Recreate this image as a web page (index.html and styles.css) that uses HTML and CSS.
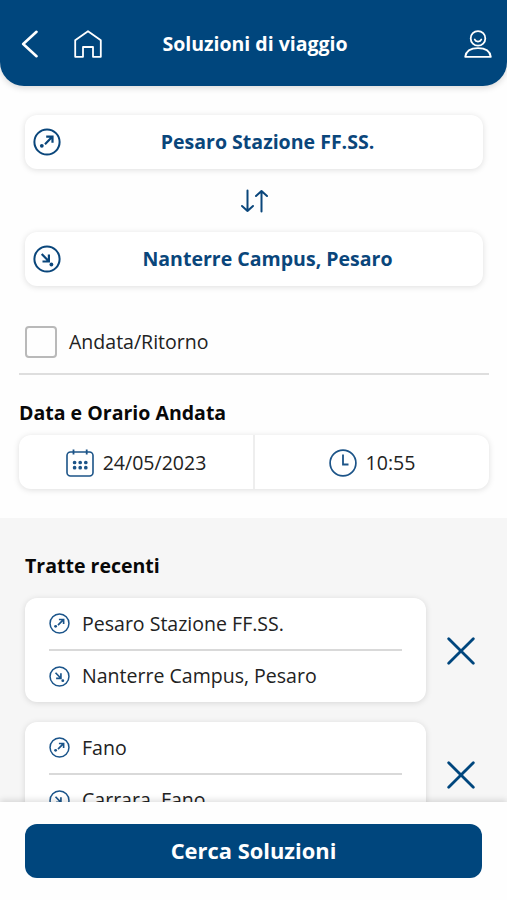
FILE: index.html
```html
<!DOCTYPE html>
<html lang="it">
<head>
<meta charset="utf-8">
<meta name="viewport" content="width=device-width, initial-scale=1">
<title>Soluzioni di viaggio</title>
<link rel="stylesheet" href="styles.css">
</head>
<body>
<svg class="defs" aria-hidden="true">
  <symbol id="depart" viewBox="0 0 28 28">
    <circle cx="14" cy="14" r="12.6" fill="none" stroke="currentColor" stroke-width="2"/>
    <path d="M12 16.2 19.2 8.8M13.2 8.6h6.3v6.2" fill="none" stroke="currentColor" stroke-width="2.2"/>
    <circle cx="8.8" cy="17.8" r="1.9" fill="currentColor"/>
  </symbol>
  <symbol id="arrive" viewBox="0 0 28 28">
    <circle cx="14" cy="14" r="12.6" fill="none" stroke="currentColor" stroke-width="2"/>
    <path d="M8.7 9 15.5 16M15.9 9.5v7H9.5" fill="none" stroke="currentColor" stroke-width="2.2"/>
    <circle cx="18.4" cy="19.5" r="1.9" fill="currentColor"/>
  </symbol>
  <symbol id="close" viewBox="0 0 28 28">
    <path d="M1.7 1.7 26.3 26.3M26.3 1.7 1.7 26.3" fill="none" stroke="currentColor" stroke-width="2.8" stroke-linecap="round"/>
  </symbol>
</svg>
<div class="app">
  <header class="topbar">
    <svg class="back" viewBox="0 0 18 28"><path d="M15.5 1.8 2.2 14 15.5 26.2" fill="none" stroke="currentColor" stroke-width="2.6" stroke-linecap="round" stroke-linejoin="round"/></svg>
    <svg class="home" viewBox="0 0 28 28"><path d="M1.2 10.2 14 1.2 26.8 10.2V26.8H19V17H9V26.8H1.2Z" fill="none" stroke="currentColor" stroke-width="1.8" stroke-linejoin="round"/></svg>
    <h1>Soluzioni di viaggio</h1>
    <svg class="user" viewBox="0 0 28 28"><g fill="none" stroke="currentColor" stroke-width="1.8" stroke-linejoin="round" stroke-linecap="round"><circle cx="14" cy="8.4" r="7.3"/><path d="M10.7 9.5c1 2.7 5.6 2.7 6.6 0M1.2 26.8c.8-5.5 5.5-8.6 12.8-8.6s12 3.1 12.8 8.6Z"/></g></svg>
  </header>
  <main class="search">
    <div class="stop"><svg><use href="#depart"/></svg><span>Pesaro Stazione FF.SS.</span></div>
    <svg class="swap" viewBox="0 0 28 24"><g fill="none" stroke="currentColor" stroke-width="2" stroke-linecap="round" stroke-linejoin="round"><path d="M7.5 1.5v20.5M2 17l5.5 5 5.5-5"/><path d="M21.5 22.5v-20.5M16 7l5.5-5 5.5 5"/></g></svg>
    <div class="stop"><svg><use href="#arrive"/></svg><span>Nanterre Campus, Pesaro</span></div>
    <div class="return"><span class="checkbox"></span><span>Andata/Ritorno</span></div>
    <h2>Data e Orario Andata</h2>
    <div class="when">
      <div class="cell">
        <svg viewBox="0 0 28 28"><rect x="1" y="3" width="26" height="24" rx="3.5" fill="none" stroke="currentColor" stroke-width="1.6"/><path d="M7.5 .5v5M20.7 .5v5" stroke="currentColor" stroke-width="1.8"/><path d="M8.6 13.5h0M14.2 13.5h0M19.8 13.5h0M8.6 18.7h0M14.2 18.7h0M19.8 18.7h0" stroke="currentColor" stroke-width="3.7" stroke-linecap="round"/></svg>
        <span>24/05/2023</span>
      </div>
      <div class="cell time">
        <svg viewBox="0 0 28 28"><circle cx="14" cy="14" r="12.9" fill="none" stroke="currentColor" stroke-width="1.7"/><path d="M14 5.5v10h5.5" fill="none" stroke="currentColor" stroke-width="1.8"/></svg>
        <span>10:55</span>
      </div>
    </div>
  </main>
  <section class="recent">
    <h2>Tratte recenti</h2>
    <div class="item">
      <div class="route">
        <div class="leg"><svg><use href="#depart"/></svg><span>Pesaro Stazione FF.SS.</span></div>
        <div class="leg"><svg><use href="#arrive"/></svg><span>Nanterre Campus, Pesaro</span></div>
      </div>
      <svg class="close"><use href="#close"/></svg>
    </div>
    <div class="item">
      <div class="route">
        <div class="leg"><svg><use href="#depart"/></svg><span>Fano</span></div>
        <div class="leg"><svg><use href="#arrive"/></svg><span>Carrara, Fano</span></div>
      </div>
      <svg class="close"><use href="#close"/></svg>
    </div>
  </section>
  <footer class="actions"><button>Cerca Soluzioni</button></footer>
</div>
</body>
</html>
```
FILE: styles.css
```css
* { box-sizing: border-box; }
body {
  margin: 0;
  font-family: "Open Sans", "Noto Sans", sans-serif;
  font-size: 19.55px;
  line-height: 26px;
  color: #222;
}
h1, h2 { margin: 0; font-size: 19.55px; line-height: 26px; font-weight: 700; }
h1 { font-size: 19.5px; text-align: center; padding-right: 22px; }
h2 { color: #080808; }
svg { display: block; flex: none; }
.defs { position: absolute; width: 0; height: 0; }
.app { height: 900px; display: flex; flex-direction: column; overflow: hidden; background: #fefefe; }
.topbar {
  flex: none;
  height: 86px;
  display: grid;
  grid-template-columns: 18px 63px 1fr 28px;
  align-items: center;
  padding: 2px 15px 0 21px;
  background: #00467d;
  color: #fff;
  border-radius: 0 0 24px 24px;
  box-shadow: 0 2px 6px rgba(0,0,0,.15);
}
.topbar h1 { padding-right: 56px; }
.back { width: 18px; height: 28px; }
.home { width: 28px; height: 28px; margin-left: 35px; }
.user { width: 28px; height: 28px; }
.search { flex: none; height: 432px; padding: 29px 18px 0 19px; }
.stop {
  height: 54px;
  margin: 0 6px;
  padding: 0 9px 0 8px;
  display: flex;
  align-items: center;
  border-radius: 12px;
  background: #fff;
  box-shadow: 0 1px 6px rgba(0,0,0,.13);
  color: #0a467b;
  font-weight: 700;
}
.stop svg { width: 28px; height: 28px; }
.stop span { flex: 1; text-align: center; }
.swap { width: 28px; height: 24px; margin: 20px auto 19px; color: #0a467b; }
.return {
  height: 89px;
  padding: 24px 6px 0;
  display: flex;
  align-items: center;
  gap: 12px;
  border-bottom: 2px solid #dedede;
}
.checkbox { width: 32px; height: 32px; border: 2px solid #b9b9b9; border-radius: 4px; }
.search h2 { margin: 25px 0 9px; }
.when {
  height: 54px;
  display: grid;
  grid-template-columns: 234px 1fr;
  border-radius: 12px;
  background: #fff;
  box-shadow: 0 1px 6px rgba(0,0,0,.13);
}
.cell { display: flex; align-items: center; justify-content: center; gap: 9px; padding-top: 2px; }
.cell svg { width: 28px; height: 28px; color: #1c5488; }
.time { border-left: 2px solid #eee; }
.recent { flex: 1; min-height: 0; overflow: hidden; padding: 35px 32px 0 25px; background: #f6f6f6; }
.recent h2 { margin-bottom: 19px; }
.item { display: flex; align-items: center; justify-content: space-between; margin-bottom: 20px; }
.route {
  width: 401px;
  height: 104px;
  padding: 0 24px;
  border-radius: 12px;
  background: #fff;
  box-shadow: 0 1px 6px rgba(0,0,0,.13);
}
.leg { height: 50px; display: flex; align-items: center; gap: 12px; }
.leg:first-child { height: 53px; border-bottom: 2px solid #d9d9d9; }
.leg svg { width: 21px; height: 21px; color: #1a548a; }
.close { width: 28px; height: 28px; margin-top: 2px; color: #00467d; }
.actions {
  flex: none;
  position: relative;
  height: 98px;
  padding: 22px 25px 0;
  background: #fefefe;
  box-shadow: 0 -2px 6px rgba(0,0,0,.13);
}
button {
  display: block;
  width: 100%;
  height: 54px;
  padding: 0;
  border: 0;
  border-radius: 12px;
  background: #00467d;
  color: #fff;
  font: 700 21.9px/28px "Open Sans", "Noto Sans", sans-serif;
}
```
